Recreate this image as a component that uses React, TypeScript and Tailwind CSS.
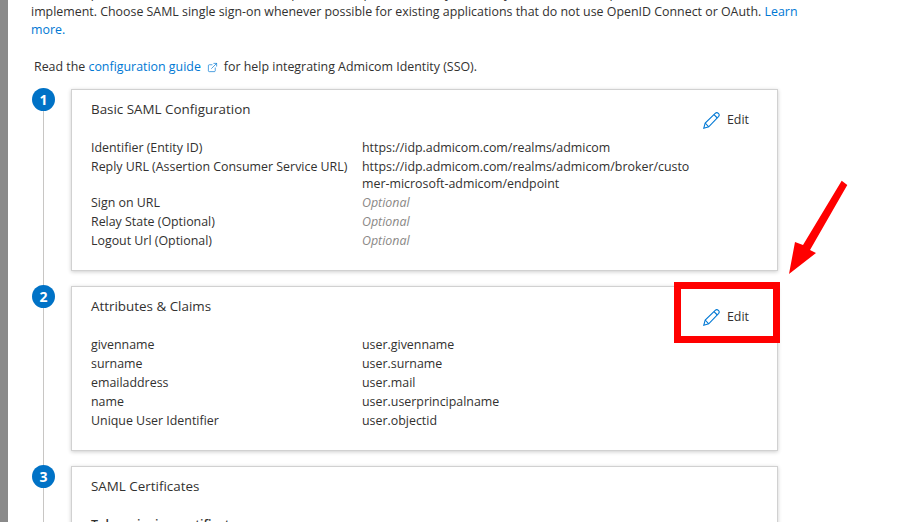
import { ExternalLink } from 'lucide-react'

type Row = { label: string; value: string; optional?: boolean }

const SAML_ROWS: Row[] = [
  { label: 'Identifier (Entity ID)', value: 'https://idp.admicom.com/realms/admicom' },
  {
    label: 'Reply URL (Assertion Consumer Service URL)',
    value: 'https://idp.admicom.com/realms/admicom/broker/customer-microsoft-admicom/endpoint',
  },
  { label: 'Sign on URL', value: 'Optional', optional: true },
  { label: 'Relay State (Optional)', value: 'Optional', optional: true },
  { label: 'Logout Url (Optional)', value: 'Optional', optional: true },
]

const CLAIM_ROWS: Row[] = [
  { label: 'givenname', value: 'user.givenname' },
  { label: 'surname', value: 'user.surname' },
  { label: 'emailaddress', value: 'user.mail' },
  { label: 'name', value: 'user.userprincipalname' },
  { label: 'Unique User Identifier', value: 'user.objectid' },
]

function PencilIcon() {
  return (
    <svg width="17" height="17" viewBox="0 0 17 17" fill="none" stroke="#0078d4" strokeWidth="1.1">
      <path d="M0.8 16.2 L2.2 11 L12.2 1.3 C13 0.6 14.4 0.5 15.4 1.4 C16.4 2.4 16.3 3.7 15.5 4.6 L5.7 14.8 Z" />
      <path d="M2.2 11 L5.7 14.8 M11 2.6 L14.3 6" />
    </svg>
  )
}

function EditButton() {
  return (
    <div className="flex items-center gap-[7px] text-[#323130]">
      <PencilIcon />
      <span>Edit</span>
    </div>
  )
}

function Step({ n, last, children }: { n: number; last?: boolean; children: React.ReactNode }) {
  return (
    <div className="flex">
      <div className="relative w-[39px] ml-[32px] shrink-0">
        <div className={`absolute left-[10.5px] top-0 w-px bg-[#c8c6c4] ${last ? 'h-[60px]' : 'h-full'}`} />
        <div className="relative mt-[-1px] flex h-[23px] w-[23px] items-center justify-center rounded-full bg-[#0072c6] text-[14px] font-bold leading-none text-white">
          {n}
        </div>
      </div>
      {children}
    </div>
  )
}

function Rows({ rows }: { rows: Row[] }) {
  return (
    <div className="flex flex-col">
      {rows.map((r) => (
        <div key={r.label} className="flex leading-[17px] py-[1px]">
          <div className="w-[271px] shrink-0">{r.label}</div>
          <div
            className={`w-[330px] break-all ${r.optional ? 'italic text-[#8a8886]' : ''}`}
          >
            {r.value}
          </div>
        </div>
      ))}
    </div>
  )
}

export default function App() {
  return (
    <div className="relative h-[522px] w-[901px] overflow-hidden bg-white font-['Open_Sans',sans-serif] text-[12.4px] text-[#323130]">
      <div className="flex h-full">
        <div className="w-2 shrink-0 bg-[#8a8a8a]" />
        <div className="min-w-0 flex-1">
          <div className="mt-[-15px] ml-[23px] w-[780px] leading-[18px]">
            An SSO implementation based on federation protocols improves security, reliability, and end user experiences and is easier to
            implement. Choose SAML single sign-on whenever possible for existing applications that do not use OpenID Connect or OAuth.{' '}
            <span className="text-[#0078d4]">Learn more.</span>
          </div>

          <div className="mt-[19px] ml-[26px] flex items-center leading-[18px]">
            Read the&nbsp;<span className="text-[#0078d4]">configuration guide</span>
            <ExternalLink className="mx-[6px] h-[11px] w-[11px] text-[#0078d4]" strokeWidth={1.5} />
            for help integrating Admicom Identity (SSO).
          </div>

          <div className="mt-[13px] -ml-2 flex flex-col">
            <Step n={1}>
              <div className="mb-[15px] h-[182px] w-[707px] border border-[#d1d1d1] bg-white px-[19px] pt-[10px] shadow-[0_1px_4px_rgba(0,0,0,0.2)]">
                <div className="flex h-[38px] items-start justify-between">
                  <div className="text-[13.4px] leading-[18px]">Basic SAML Configuration</div>
                  <div className="mt-[11px] mr-[9px]"><EditButton /></div>
                </div>
                <Rows rows={SAML_ROWS} />
              </div>
            </Step>
            <Step n={2}>
              <div className="mb-[15px] h-[165px] w-[707px] border border-[#d1d1d1] bg-white px-[19px] pt-[10px] shadow-[0_1px_4px_rgba(0,0,0,0.2)]">
                <div className="flex h-[38px] items-start justify-between">
                  <div className="text-[13.4px] leading-[18px]">Attributes &amp; Claims</div>
                  <div className="mt-[11px] mr-[9px]"><EditButton /></div>
                </div>
                <Rows rows={CLAIM_ROWS} />
              </div>
            </Step>
            <Step n={3}>
              <div className="h-[120px] w-[707px] border border-[#d1d1d1] bg-white px-[19px] pt-[10px] shadow-[0_1px_4px_rgba(0,0,0,0.2)]">
                <div className="text-[13.4px] leading-[18px]">SAML Certificates</div>
                <div className="mt-[21px] font-semibold">Token signing certificate</div>
              </div>
            </Step>
          </div>
        </div>
      </div>

      {/* red annotation */}
      <div className="absolute left-[674px] top-[282px] h-[61px] w-[106px] border-[7px] border-[#ff0000]" />
      <svg className="absolute left-[785px] top-[178px]" width="66" height="98" viewBox="0 0 66 98">
        <path d="M56.7 2.7 L62.3 7 L25 72 L31 75 L4 96 L10 64 L18 67 Z" fill="#ff0000" />
      </svg>
    </div>
  )
}
